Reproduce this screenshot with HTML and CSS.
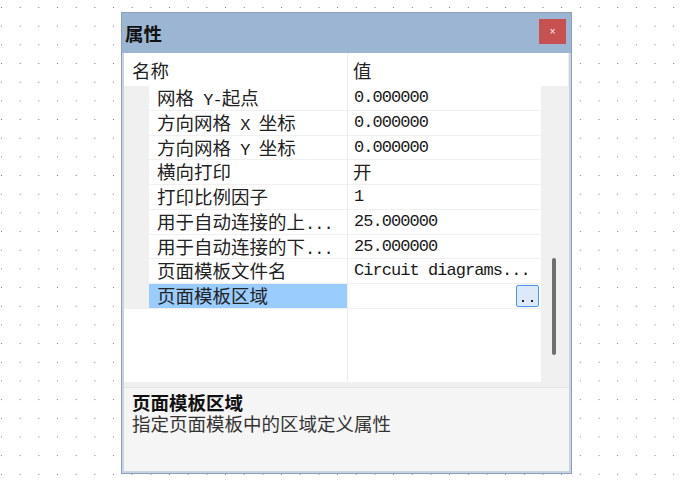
FILE: index.html
```html
<!DOCTYPE html>
<html lang="zh-CN">
<head>
    <meta charset="UTF-8">
    <title>属性</title>
    <link rel="stylesheet" href="styles.css">
</head>
<body>
<div class="window">
    <div class="titlebar">
        <span class="title">属性</span>
        <span class="close">×</span>
    </div>
    <div class="content">
        <div class="head">
            <div class="head-name">名称</div>
            <div class="head-val">值</div>
        </div>
        <div class="grid">
            <div class="rows">
                <div class="row">
                    <div class="gutter"></div>
                    <div class="name">网格<span class="en">&nbsp;Y-</span>起点</div>
                    <div class="val en">0.000000</div>
                </div>
                <div class="row">
                    <div class="gutter"></div>
                    <div class="name">方向网格<span class="en">&nbsp;X&nbsp;</span>坐标</div>
                    <div class="val en">0.000000</div>
                </div>
                <div class="row">
                    <div class="gutter"></div>
                    <div class="name">方向网格<span class="en">&nbsp;Y&nbsp;</span>坐标</div>
                    <div class="val en">0.000000</div>
                </div>
                <div class="row">
                    <div class="gutter"></div>
                    <div class="name">横向打印</div>
                    <div class="val">开</div>
                </div>
                <div class="row">
                    <div class="gutter"></div>
                    <div class="name">打印比例因子</div>
                    <div class="val en">1</div>
                </div>
                <div class="row">
                    <div class="gutter"></div>
                    <div class="name">用于自动连接的上<span class="en">...</span></div>
                    <div class="val en">25.000000</div>
                </div>
                <div class="row">
                    <div class="gutter"></div>
                    <div class="name">用于自动连接的下<span class="en">...</span></div>
                    <div class="val en">25.000000</div>
                </div>
                <div class="row">
                    <div class="gutter"></div>
                    <div class="name">页面模板文件名</div>
                    <div class="val en">Circuit diagrams...</div>
                </div>
                <div class="row selected">
                    <div class="gutter"></div>
                    <div class="name">页面模板区域</div>
                    <div class="val btn-cell">
                        <span class="more"><i></i><i></i></span>
                    </div>
                </div>
            </div>
            <div class="scrollbar">
                <div class="thumb"></div>
            </div>
        </div>
        <div class="desc">
            <p class="desc-title">页面模板区域</p>
            <p class="desc-text">指定页面模板中的区域定义属性</p>
        </div>
    </div>
</div>
</body>
</html>
```

FILE: styles.css
```css
html, body {
    margin: 0;
    height: 100%;
}

body {
    background-color: #fff;
    background-image: radial-gradient(circle at 0.5px 0.5px, #7a7a7a 0.7px, transparent 0.9px);
    background-size: 18.68px 18.68px;
    background-position: 1px 7px;
    font-family: "Noto Sans CJK SC", sans-serif;
    color: #222;
    overflow: hidden;
}

p {
    margin: 0;
}

.window {
    box-sizing: border-box;
    width: 451px;
    height: 462px;
    margin: 12px 0 0 121px;
    border: 1px solid #8e9fb8;
    background: #c8d3e3;
    display: flex;
    flex-direction: column;
}

.titlebar {
    height: 40px;
    background: #9cb5d2;
    display: flex;
    justify-content: space-between;
    align-items: flex-start;
    padding-left: 3px;
}

.title {
    font-size: 18.5px;
    font-weight: bold;
    line-height: 40px;
    color: #111;
}

.close {
    width: 27px;
    height: 25px;
    margin: 6px 5px 0 0;
    background: #c75050;
    color: #fff;
    font-family: "DejaVu Sans", sans-serif;
    font-size: 8px;
    line-height: 25px;
    text-align: center;
}

.content {
    flex: 1;
    margin: 0 2px 2px;
    background: #fff;
    display: flex;
    flex-direction: column;
    font-size: 18.5px;
}

.en {
    font-family: "Liberation Mono", monospace;
    font-size: 17px;
    letter-spacing: -0.95px;
    color: #1a1a1a;
}

.head {
    height: 33px;
    display: flex;
    align-items: center;
    border-right: 1px solid #eee;
}

.head-name {
    width: 215px;
    padding-left: 8px;
}

.head-val {
    flex: 1;
    height: 100%;
    display: flex;
    align-items: center;
    padding-left: 5px;
    border-left: 1px solid #ececec;
}

.grid {
    height: 296px;
    display: flex;
}

.rows {
    width: 417px;
    background: linear-gradient(to right, transparent 223px, #ececec 223px, #ececec 224px, transparent 224px);
}

.row {
    box-sizing: border-box;
    height: 24.78px;
    display: flex;
    border-bottom: 1px solid #f0f0f0;
}

.gutter {
    width: 25px;
    background: #f0f0f0;
}

.name {
    width: 190px;
    padding-left: 8px;
    line-height: 23.78px;
    white-space: nowrap;
}

.val {
    flex: 1;
    padding-left: 5px;
    line-height: 23.78px;
    border-left: 1px solid #ececec;
    white-space: nowrap;
}

.val.en {
    padding-left: 6px;
}

.btn-cell {
    display: flex;
    align-items: flex-start;
}

.selected .name {
    background: #9acdfe;
}

.more {
    box-sizing: border-box;
    width: 23px;
    height: 22px;
    margin: 1px 2px 0 auto;
    border: 1px solid #4a9be6;
    border-radius: 2px;
    background: #dde9f6;
    display: flex;
    justify-content: center;
    align-items: flex-end;
    gap: 7px;
    padding-bottom: 4px;
}

.more i {
    width: 2px;
    height: 2px;
    background: #222;
}

.scrollbar {
    flex: 1;
    background: #f0f0f0;
    padding: 172px 0 0 11px;
}

.thumb {
    width: 4px;
    height: 97px;
    border-radius: 2px;
    background: #6f6f6f;
}

.desc {
    flex: 1;
    background: #f5f5f5;
    border-top: 5px solid #f0f0f0;
    box-shadow: inset 0 1px #e4e4e4;
    padding: 4px 8px 0;
}

.desc-title {
    font-weight: bold;
    line-height: 22px;
    color: #111;
}

.desc-text {
    line-height: 20px;
    color: #333;
}
```
